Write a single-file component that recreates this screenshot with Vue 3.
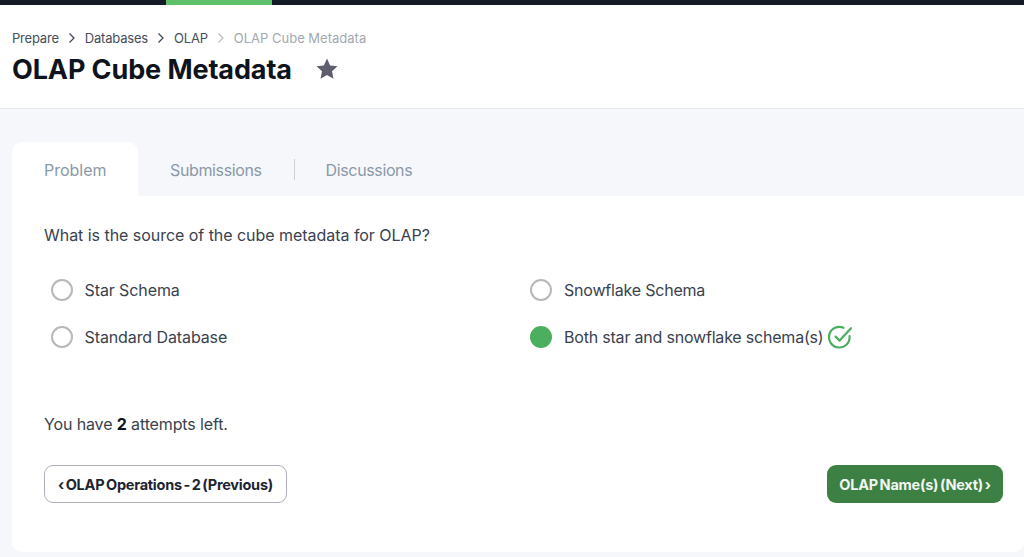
<script setup>
const crumbs = ['Prepare', 'Databases', 'OLAP']
const options = [
  { label: 'Star Schema' },
  { label: 'Snowflake Schema' },
  { label: 'Standard Database' },
  { label: 'Both star and snowflake schema(s)', correct: true }
]
</script>

<template>
  <div class="page">
    <div class="topbar"><div class="topbar-active"></div></div>
    <header class="header">
      <nav class="crumbs">
        <template v-for="c in crumbs" :key="c">
          <span class="crumb">{{ c }}</span>
          <svg class="sep" width="8" height="12" viewBox="0 0 8 12"><path d="M1.5 1.5 6 6l-4.5 4.5" fill="none" stroke="#39424e" stroke-width="1.2"/></svg>
        </template>
        <span class="crumb current">OLAP Cube Metadata</span>
      </nav>
      <div class="title-row">
        <h1 class="title">OLAP Cube Metadata</h1>
        <svg class="star" width="24" height="24" viewBox="0 0 24 24"><path d="M12 1.6l3.1 6.9 7.4.8-5.5 5 1.5 7.4-6.5-3.8-6.5 3.8 1.5-7.4-5.5-5 7.4-.8z" fill="#5d5d6e"/></svg>
      </div>
    </header>
    <main class="body">
      <div class="tabs">
        <div class="tab active">Problem</div>
        <div class="tab sub">Submissions</div>
        <div class="divider"></div>
        <div class="tab disc">Discussions</div>
      </div>
      <section class="card">
        <p class="question">What is the source of the cube metadata for OLAP?</p>
        <div class="options">
          <div v-for="o in options" :key="o.label" class="option">
            <span class="radio" :class="{ on: o.correct }"></span>
            <span class="label">{{ o.label }}</span>
            <svg v-if="o.correct" class="check" width="26" height="26" viewBox="0 0 26 26" fill="none" stroke="#4caf5f" stroke-width="2.2" stroke-linecap="round" stroke-linejoin="round">
              <path d="M22.6 12.2v1a10.3 10.3 0 1 1-6.1-9.4"/>
              <path d="M8.6 12.6l4 4L24 4.2"/>
            </svg>
          </div>
        </div>
        <p class="attempts">You have <b>2</b> attempts left.</p>
        <div class="actions">
          <button class="btn prev">‹ OLAP Operations - 2 (Previous)</button>
          <button class="btn next">OLAP Name(s) (Next) ›</button>
        </div>
      </section>
    </main>
  </div>
</template>

<style>
html, body { margin: 0; background: #f6f7fb; overflow: hidden; }
</style>

<style scoped>
.page { width: 1024px; height: 557px; font-family: Inter, "Noto Sans", sans-serif; color: #39424e; overflow: hidden; }
.topbar { height: 5px; background: #141a26; padding-left: 166px; }
.topbar-active { width: 106px; height: 5px; background: #5fc06c; }
.header { height: 104px; box-sizing: border-box; background: #fff; border-bottom: 1px solid #e8e9ee; padding: 25px 12px 0; }
.crumbs { display: flex; align-items: center; height: 16px; font-size: 13px; letter-spacing: -0.2px; }
.sep { margin: 0 9px; }
.crumb { color: #454d58; }
.current { color: #a4a8ae; letter-spacing: 0; }
.crumbs svg:nth-of-type(3) path { stroke: #b8bcc2; }
.title-row { display: flex; align-items: center; margin-top: 6px; }
.title { margin: 0; font-size: 27px; line-height: 36px; font-weight: 700; color: #0e141e; letter-spacing: -0.1px; }
.star { margin: 0 0 2px 23px; }
.body { padding: 33px 0 0 12px; }
.tabs { display: flex; align-items: center; height: 54px; font-size: 16px; color: #8a99a6; }
.tab { height: 54px; line-height: 56px; }
.active { width: 126px; box-sizing: border-box; padding-left: 32px; background: #fff; border-radius: 10px 10px 0 0; }
.sub, .disc { letter-spacing: -0.37px; }
.sub { margin-left: 32px; }
.divider { width: 1px; height: 21px; background: #c9d0d6; margin-left: 32px; }
.disc { margin-left: 31px; }
.card { background: #fff; height: 356px; box-sizing: border-box; padding: 28px 21px 0 32px; border-radius: 0 0 10px 10px; }
.question { margin: 0; font-size: 16px; line-height: 22px; color: #39424e; letter-spacing: -0.04px; }
.options { display: grid; grid-template-columns: 479.5px 1fr; row-gap: 25px; margin-top: 33px; padding-left: 6.5px; }
.option { display: flex; align-items: center; height: 22px; font-size: 16px; letter-spacing: -0.2px; }
.option:nth-child(odd) { letter-spacing: -0.1px; }
.radio { width: 22px; height: 22px; box-sizing: border-box; border: 2px solid #b8b8b8; border-radius: 50%; margin-right: 12px; flex: none; }
.radio.on { background: #4caf5f; border-color: #4caf5f; }
.check { margin-left: 4px; }
.attempts { margin: 65px 0 0; font-size: 16px; line-height: 22px; letter-spacing: -0.13px; }
.attempts b { color: #0e141e; font-weight: 700; }
.actions { display: flex; justify-content: space-between; margin-top: 30px; }
.btn { height: 38px; box-sizing: border-box; border-radius: 9px; font-family: inherit; font-size: 14.5px; font-weight: 700; letter-spacing: -0.25px; word-spacing: -1.5px; padding: 0; }
.prev { width: 243px; background: #fff; border: 1px solid #b0adc0; color: #1c2430; }
.next { width: 176px; background: #3c8043; border: 0; color: #f1f6f1; }
</style>
